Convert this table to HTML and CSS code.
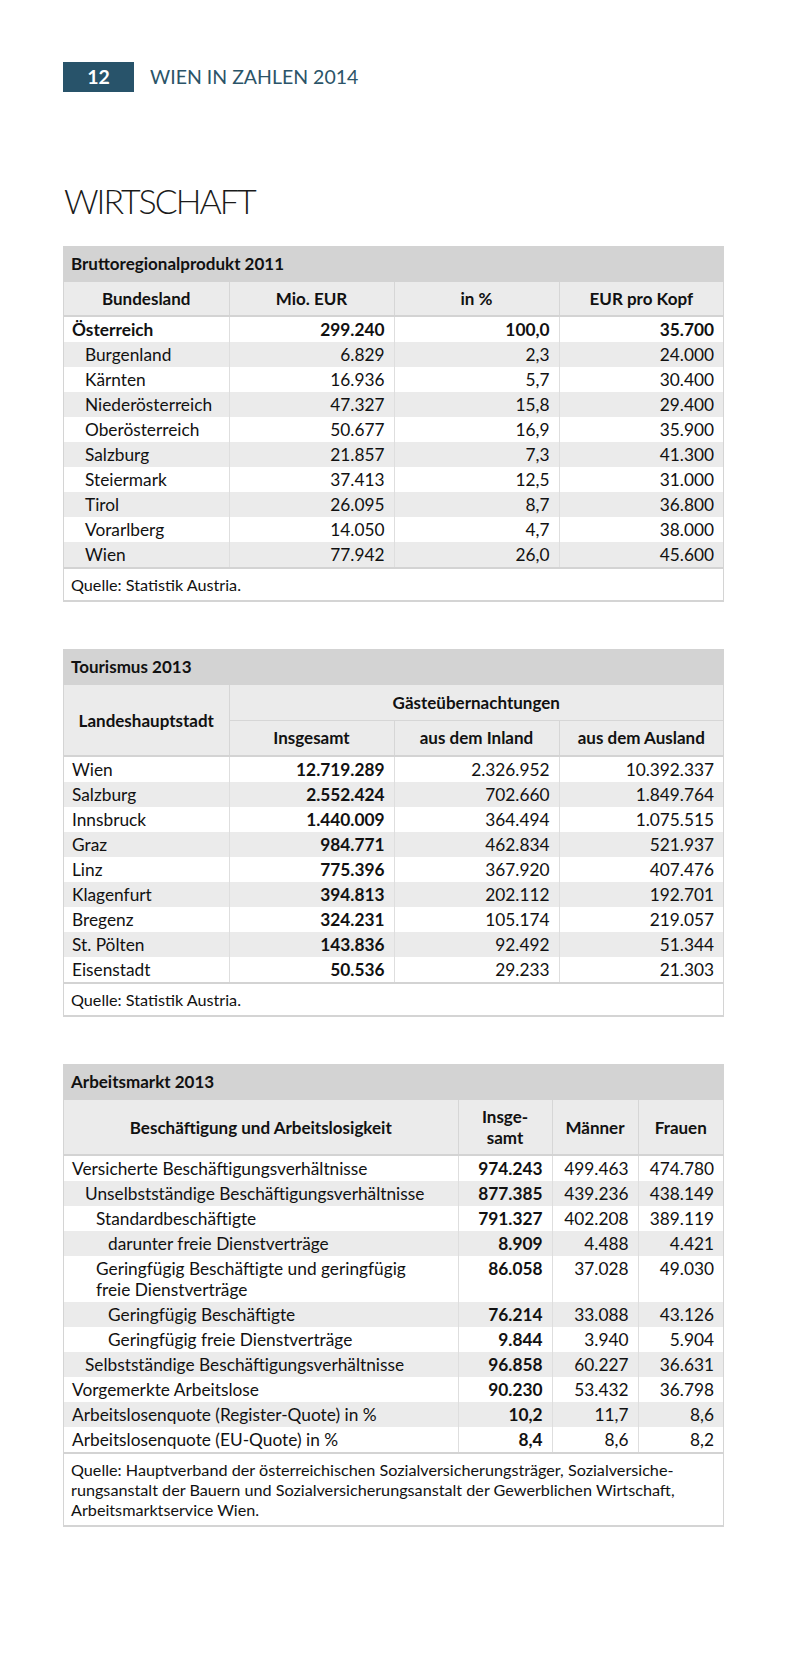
FILE: index.html
```html
<!DOCTYPE html>
<html lang="de">
<head>
<meta charset="utf-8">
<title>Wien in Zahlen 2014 – Wirtschaft</title>
<link rel="stylesheet" href="styles.css">
</head>
<body>
<div class="page">
  <header class="runner">
    <span class="pageno">12</span>
    <span class="runtitle">WIEN IN ZAHLEN 2014</span>
  </header>

  <h1 class="chapter">WIRTSCHAFT</h1>

  <section class="block">
    <div class="block-title">Bruttoregionalprodukt 2011</div>
    <table class="data t1">
      <colgroup><col class="c1"><col class="c2"><col class="c3"><col class="c4"></colgroup>
      <thead>
        <tr class="h-single"><th>Bundesland</th><th>Mio. EUR</th><th>in %</th><th>EUR pro Kopf</th></tr>
      </thead>
      <tbody>
        <tr class="strong"><td>Österreich</td><td>299.240</td><td>100,0</td><td>35.700</td></tr>
        <tr class="alt"><td class="l1">Burgenland</td><td>6.829</td><td>2,3</td><td>24.000</td></tr>
        <tr><td class="l1">Kärnten</td><td>16.936</td><td>5,7</td><td>30.400</td></tr>
        <tr class="alt"><td class="l1">Niederösterreich</td><td>47.327</td><td>15,8</td><td>29.400</td></tr>
        <tr><td class="l1">Oberösterreich</td><td>50.677</td><td>16,9</td><td>35.900</td></tr>
        <tr class="alt"><td class="l1">Salzburg</td><td>21.857</td><td>7,3</td><td>41.300</td></tr>
        <tr><td class="l1">Steiermark</td><td>37.413</td><td>12,5</td><td>31.000</td></tr>
        <tr class="alt"><td class="l1">Tirol</td><td>26.095</td><td>8,7</td><td>36.800</td></tr>
        <tr><td class="l1">Vorarlberg</td><td>14.050</td><td>4,7</td><td>38.000</td></tr>
        <tr class="alt"><td class="l1">Wien</td><td>77.942</td><td>26,0</td><td>45.600</td></tr>
      </tbody>
    </table>
    <div class="source">Quelle: Statistik Austria.</div>
  </section>

  <section class="block">
    <div class="block-title">Tourismus 2013</div>
    <table class="data t2">
      <colgroup><col class="c1"><col class="c2"><col class="c3"><col class="c4"></colgroup>
      <thead>
        <tr class="h-top"><th rowspan="2" class="last">Landeshauptstadt</th><th colspan="3">Gästeübernachtungen</th></tr>
        <tr class="h-bottom"><th>Insgesamt</th><th>aus dem Inland</th><th>aus dem Ausland</th></tr>
      </thead>
      <tbody class="bold2">
        <tr><td>Wien</td><td>12.719.289</td><td>2.326.952</td><td>10.392.337</td></tr>
        <tr class="alt"><td>Salzburg</td><td>2.552.424</td><td>702.660</td><td>1.849.764</td></tr>
        <tr><td>Innsbruck</td><td>1.440.009</td><td>364.494</td><td>1.075.515</td></tr>
        <tr class="alt"><td>Graz</td><td>984.771</td><td>462.834</td><td>521.937</td></tr>
        <tr><td>Linz</td><td>775.396</td><td>367.920</td><td>407.476</td></tr>
        <tr class="alt"><td>Klagenfurt</td><td>394.813</td><td>202.112</td><td>192.701</td></tr>
        <tr><td>Bregenz</td><td>324.231</td><td>105.174</td><td>219.057</td></tr>
        <tr class="alt"><td>St. Pölten</td><td>143.836</td><td>92.492</td><td>51.344</td></tr>
        <tr><td>Eisenstadt</td><td>50.536</td><td>29.233</td><td>21.303</td></tr>
      </tbody>
    </table>
    <div class="source">Quelle: Statistik Austria.</div>
  </section>

  <section class="block">
    <div class="block-title">Arbeitsmarkt 2013</div>
    <table class="data t3">
      <colgroup><col class="d1"><col class="d2"><col class="d3"><col class="d4"></colgroup>
      <thead>
        <tr class="h-double"><th>Beschäftigung und Arbeitslosigkeit</th><th>Insge-<br>samt</th><th>Männer</th><th>Frauen</th></tr>
      </thead>
      <tbody class="bold2">
        <tr><td>Versicherte Beschäftigungsverhältnisse</td><td>974.243</td><td>499.463</td><td>474.780</td></tr>
        <tr class="alt"><td class="l1">Unselbstständige Beschäftigungsverhältnisse</td><td>877.385</td><td>439.236</td><td>438.149</td></tr>
        <tr><td class="l2">Standardbeschäftigte</td><td>791.327</td><td>402.208</td><td>389.119</td></tr>
        <tr class="alt"><td class="l3">darunter freie Dienstverträge</td><td>8.909</td><td>4.488</td><td>4.421</td></tr>
        <tr><td class="l2">Geringfügig Beschäftigte und geringfügig<br>freie Dienstverträge</td><td>86.058</td><td>37.028</td><td>49.030</td></tr>
        <tr class="alt"><td class="l3">Geringfügig Beschäftigte</td><td>76.214</td><td>33.088</td><td>43.126</td></tr>
        <tr><td class="l3">Geringfügig freie Dienstverträge</td><td>9.844</td><td>3.940</td><td>5.904</td></tr>
        <tr class="alt"><td class="l1">Selbstständige Beschäftigungsverhältnisse</td><td>96.858</td><td>60.227</td><td>36.631</td></tr>
        <tr><td>Vorgemerkte Arbeitslose</td><td>90.230</td><td>53.432</td><td>36.798</td></tr>
        <tr class="alt"><td>Arbeitslosenquote (Register-Quote) in %</td><td>10,2</td><td>11,7</td><td>8,6</td></tr>
        <tr><td>Arbeitslosenquote (EU-Quote) in %</td><td>8,4</td><td>8,6</td><td>8,2</td></tr>
      </tbody>
    </table>
    <div class="source">Quelle: Hauptverband der österreichischen Sozialversicherungsträger, Sozialversiche-<br>rungsanstalt der Bauern und Sozialversicherungsanstalt der Gewerblichen Wirtschaft,<br>Arbeitsmarktservice Wien.</div>
  </section>
</div>
</body>
</html>
```

FILE: styles.css
```css
* { box-sizing: border-box; }

html, body {
  margin: 0;
  padding: 0;
  background: #ffffff;
}

body {
  font-family: Lato, "Liberation Sans", sans-serif;
  color: #111111;
}

.page {
  padding: 62px 0 0 63px;
  width: 787px;
}

/* running header */
.runner {
  display: flex;
  align-items: center;
  height: 30px;
  gap: 16px;
}

.pageno {
  width: 71px;
  height: 30px;
  line-height: 30px;
  background: #28536a;
  color: #ffffff;
  font-weight: 700;
  font-size: 19.5px;
  text-align: center;
}

.runtitle {
  font-size: 19.5px;
  line-height: 30px;
  color: #2b5468;
}

.chapter {
  margin: 89px 0 25px 1px;
  font-size: 34px;
  line-height: 40px;
  font-weight: 300;
  letter-spacing: -2px;
  color: #1a1a1a;
}

/* table blocks */
.block {
  width: 661px;
  margin-bottom: 47px;
  border-left: 1px solid #d4d4d4;
  border-right: 1px solid #d4d4d4;
  border-bottom: 2px solid #d4d4d4;
}

.block-title {
  background: #d3d3d3;
  height: 36px;
  line-height: 36px;
  padding: 0 8px;
  font-weight: 700;
  font-size: 17px;
  margin: 0 -1px;
}

.data {
  width: 100%;
  border-collapse: collapse;
  table-layout: fixed;
  font-size: 17.3px;
}

.t1 .c1, .t2 .c1 { width: 165px; }
.t1 .c2, .t2 .c2 { width: 165px; }
.t1 .c3, .t2 .c3 { width: 165px; }

.t3 .d1 { width: 394px; }
.t3 .d2 { width: 94px; }
.t3 .d3 { width: 86px; }

.data th {
  background: #ebebeb;
  font-weight: 700;
  font-size: 17px;
  text-align: center;
  vertical-align: middle;
  line-height: 21px;
  padding: 0 6px;
  border-left: 1px solid #d6d6d6;
}

.data th:first-child { border-left: none; }
.data thead tr:last-child th,
.data th.last { border-bottom: 2px solid #d3d3d3; }

.h-single th { height: 34px; }
.h-top th { height: 35px; }
.h-top th[colspan] { border-bottom: 1px solid #d6d6d6; }
.h-top th[rowspan] { border-left: none; }
.h-bottom th { height: 36px; }
.h-bottom th:first-child { border-left: 1px solid #d6d6d6; }
.h-double th { height: 55px; }

.data td {
  padding: 2px 9px 2px 8px;
  line-height: 21px;
  text-align: right;
  vertical-align: top;
  border-left: 1px solid #dedede;
  white-space: nowrap;
}

.data td:first-child {
  text-align: left;
  border-left: none;
}

.data tr.alt td { background: #ebebeb; }

.data tr.strong td { font-weight: 700; }
.bold2 td:nth-child(2) { font-weight: 700; }

.data td.l1 { padding-left: 21px; }
.data td.l2 { padding-left: 32px; }
.data td.l3 { padding-left: 44px; }

.source {
  border-top: 2px solid #d3d3d3;
  padding: 6px 7px 5px;
  font-size: 16.2px;
  line-height: 20px;
}
```
